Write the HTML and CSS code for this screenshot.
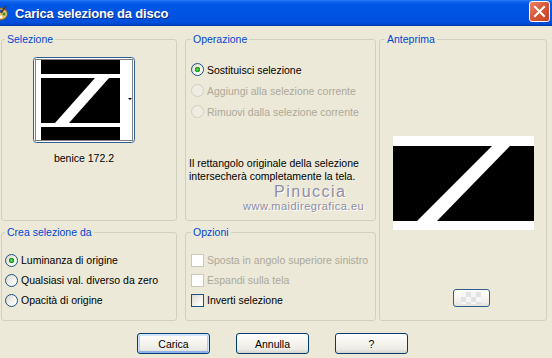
FILE: index.html
```html
<!DOCTYPE html>
<html lang="it">
<head>
    <meta charset="UTF-8">
    <title>Carica selezione da disco</title>
    <link rel="stylesheet" href="styles.css">
</head>
<body>

    <div class="title-bar">
        <svg class="app-icon" width="16" height="16" viewBox="0 0 16 16">
            <ellipse cx="8" cy="9" rx="7.5" ry="6" fill="#e6bd6a" stroke="#8a5a1c" stroke-width="1"/>
            <circle cx="5" cy="7" r="1.6" fill="#d22"/>
            <circle cx="9" cy="6" r="1.6" fill="#1f4fd8"/>
            <circle cx="12" cy="9" r="1.5" fill="#2a9a2a"/>
            <circle cx="9" cy="12" r="1.4" fill="#fff"/>
            <path d="M14 1 L9 8" stroke="#5a3a12" stroke-width="1.6"/>
        </svg>
        <span class="title">Carica selezione da disco</span>
        <div class="close-btn">
            <svg width="13" height="13" viewBox="0 0 13 13">
                <path d="M2 2 L11 11 M11 2 L2 11" stroke="#fff" stroke-width="2" stroke-linecap="square"/>
            </svg>
        </div>
    </div>

    <div class="dialog">
        <!-- Selezione -->
        <fieldset class="group area-sel">
            <legend class="legend-left">Selezione</legend>
            <div class="sel-body">
                <svg class="thumb" width="102" height="86" viewBox="0 0 102 86">
                    <rect x="0.5" y="0.5" width="101" height="85" rx="3" fill="#fff" stroke="#2f5f93"/>
                    <rect x="2.5" y="2.5" width="97" height="81" fill="none" stroke="#000" stroke-dasharray="1 1"/>
                    <rect x="8" y="3" width="79" height="80" fill="#000"/>
                    <rect x="8" y="17" width="79" height="4" fill="#fff"/>
                    <rect x="8" y="66" width="79" height="4" fill="#fff"/>
                    <polygon points="22,66 36,66 76,21 62,21" fill="#fff"/>
                    <polygon points="95,41 99,41 97,43" fill="#000"/>
                </svg>
                <div class="thumb-name">benice 172.2</div>
            </div>
        </fieldset>

        <!-- Operazione -->
        <fieldset class="group area-op">
            <legend>Operazione</legend>
            <div class="op-list">
                <label class="option"><input type="radio" name="op" checked>Sostituisci selezione</label>
                <label class="option disabled"><input type="radio" name="op" disabled>Aggiungi alla selezione corrente</label>
                <label class="option disabled"><input type="radio" name="op" disabled>Rimuovi dalla selezione corrente</label>
            </div>
            <p class="note">Il rettangolo originale della selezione intersecherà completamente la tela.</p>
            <div class="watermark">
                <div class="wm-name">Pinuccia</div>
                <div class="wm-url">www.maidiregrafica.eu</div>
            </div>
        </fieldset>

        <!-- Anteprima -->
        <fieldset class="group area-prev">
            <legend>Anteprima</legend>
            <div class="prev-body">
                <svg class="preview" width="141" height="94" viewBox="0 0 141 94">
                    <rect width="141" height="94" fill="#fff"/>
                    <rect y="10" width="141" height="75" fill="#000"/>
                    <polygon points="24,85 44,85 117,10 99,10" fill="#fff"/>
                </svg>
                <div class="bg-btn"><span class="checker"></span></div>
            </div>
        </fieldset>

        <!-- Crea selezione da -->
        <fieldset class="group area-crea">
            <legend class="legend-left">Crea selezione da</legend>
            <div class="small-list list-crea">
                <label class="option"><input type="radio" name="src" checked>Luminanza di origine</label>
                <label class="option"><input type="radio" name="src">Qualsiasi val. diverso da zero</label>
                <label class="option"><input type="radio" name="src">Opacità di origine</label>
            </div>
        </fieldset>

        <!-- Opzioni -->
        <fieldset class="group area-opt">
            <legend>Opzioni</legend>
            <div class="small-list list-opt">
                <label class="option disabled"><input type="checkbox" disabled>Sposta in angolo superiore sinistro</label>
                <label class="option disabled"><input type="checkbox" disabled>Espandi sulla tela</label>
                <label class="option"><input type="checkbox">Inverti selezione</label>
            </div>
        </fieldset>
    </div>

    <div class="buttons">
        <button class="btn default">Carica</button>
        <button class="btn">Annulla</button>
        <button class="btn">?</button>
    </div>

</body>
</html>
```

FILE: styles.css
```css
* {
    margin: 0;
    padding: 0;
    box-sizing: border-box;
}

body {
    width: 552px;
    height: 358px;
    overflow: hidden;
    background: #ece9d8;
    font-family: "Liberation Sans", Arial, sans-serif;
    font-size: 10.5px;
    color: #000;
}

/* title bar */
.title-bar {
    height: 26px;
    display: flex;
    align-items: center;
    overflow: hidden;
    background: linear-gradient(to bottom, #2a7bf5 0%, #0a5fea 8%, #0056e4 20%, #0054e3 55%, #0050dc 85%, #0045c8 95%, #0036a0 100%);
}

.app-icon {
    flex: none;
    margin-left: -8px;
}

.title {
    margin-left: 7px;
    color: #fff;
    font-weight: bold;
    font-size: 13px;
    letter-spacing: -0.2px;
    text-shadow: 1px 1px 0 #0a2a8a;
}

.close-btn {
    margin-left: auto;
    margin-right: 2px;
    align-self: flex-start;
    margin-top: 1px;
    width: 21px;
    height: 21px;
    border: 1px solid #fff;
    border-radius: 3px;
    background: linear-gradient(135deg, #e9866a 0%, #d95a3a 45%, #c63f1f 100%);
    display: flex;
    align-items: center;
    justify-content: center;
}

/* group boxes */
.dialog {
    display: grid;
    grid-template-columns: 176px 8px 191px 3px 168px;
    grid-template-rows: 188px 95px;
    grid-template-areas:
        "sel . op . prev"
        "crea . opt . prev";
    row-gap: 5px;
    padding: 7px 0 0 1px;
}

.area-sel { grid-area: sel; }
.area-op { grid-area: op; }
.area-prev { grid-area: prev; }
.area-crea { grid-area: crea; }
.area-opt { grid-area: opt; }

.group {
    border: 1px solid #d0d0bf;
    border-radius: 3px;
    margin: 0;
    padding: 0;
    min-width: 0;
}

.group legend {
    margin-left: 5px;
    padding: 0 2px;
    line-height: 13px;
    color: #0046d5;
}

.group .legend-left {
    margin-left: 3px;
}

/* selezione */
.sel-body {
    display: flex;
    flex-direction: column;
    align-items: center;
    padding-right: 10px;
}

.thumb {
    display: block;
    margin-top: 11px;
}

.thumb-name {
    margin-top: 9px;
    line-height: 13px;
}

/* options */
.option {
    display: flex;
    align-items: center;
    gap: 3px;
    height: 21px;
    white-space: nowrap;
}

.option.disabled {
    color: #aca899;
}

.option input {
    appearance: none;
    flex: none;
    width: 13px;
    height: 13px;
    margin: 0;
    border: 1px solid #1c5180;
    background: linear-gradient(135deg, #dcd9cd 0%, #f4f3ee 60%, #fff 100%);
}

.option input[type="radio"] {
    border-radius: 50%;
}

.option input[type="radio"]:checked {
    background:
        radial-gradient(circle at 50% 50%, #6fe06b 0, #2bb12b 1.5px, #1e9a1e 2.5px, rgba(30, 154, 30, 0) 3px),
        linear-gradient(135deg, #dcd9cd 0%, #f4f3ee 60%, #fff 100%);
}

.option input[type="radio"]:disabled {
    border-color: #d2cfc2;
    background: #efede2;
}

.option input[type="checkbox"]:disabled {
    border-color: #cac8bb;
    background: #fff;
}

.op-list {
    padding: 13px 0 0 5px;
}

.note {
    margin-top: 35px;
    padding-left: 3px;
    line-height: 13px;
}

.watermark {
    color: #8c8ca6;
    text-shadow: 1px 1px 0 #fff;
}

.wm-name {
    padding-left: 88px;
    font-size: 16px;
    line-height: 17px;
    letter-spacing: 1.5px;
}

.wm-url {
    padding-left: 57px;
    font-size: 11px;
    line-height: 12px;
    letter-spacing: 0.5px;
}

.small-list {
    padding-top: 11px;
}

.small-list .option {
    height: 20px;
}

.list-crea {
    padding-left: 3px;
}

.list-opt {
    padding-left: 5px;
}

/* anteprima */
.prev-body {
    display: flex;
    flex-direction: column;
    align-items: center;
}

.preview {
    display: block;
    margin-top: 90px;
}

.bg-btn {
    margin: 59px 0 0 16px;
    width: 37px;
    height: 18px;
    border: 1px solid #2c5e93;
    border-radius: 3px;
    background: linear-gradient(#fff, #f2f1ec 70%, #e4e1d8);
    display: flex;
    align-items: center;
    justify-content: center;
}

.checker {
    width: 20px;
    height: 12px;
    background-color: #f6f6f6;
    background-image: conic-gradient(#e2e2e2 25%, transparent 0 50%, #e2e2e2 0 75%, transparent 0);
    background-size: 10px 10px;
}

/* bottom buttons */
.buttons {
    display: flex;
    justify-content: center;
    gap: 26px;
    margin-top: 12px;
    padding-right: 7px;
}

.btn {
    width: 73px;
    height: 21px;
    border: 1px solid #003c74;
    border-radius: 3px;
    background: linear-gradient(#ffffff 0%, #f6f5f0 40%, #ecebe6 80%, #d8d3c8 100%);
    font-family: inherit;
    font-size: 10.5px;
    color: #000;
}

.btn.default {
    box-shadow: inset 0 1px 0 1px #cee7ff, inset 0 -1px 0 1px #8fb0ea, inset 0 0 0 2px #b3cdf4;
}
```
